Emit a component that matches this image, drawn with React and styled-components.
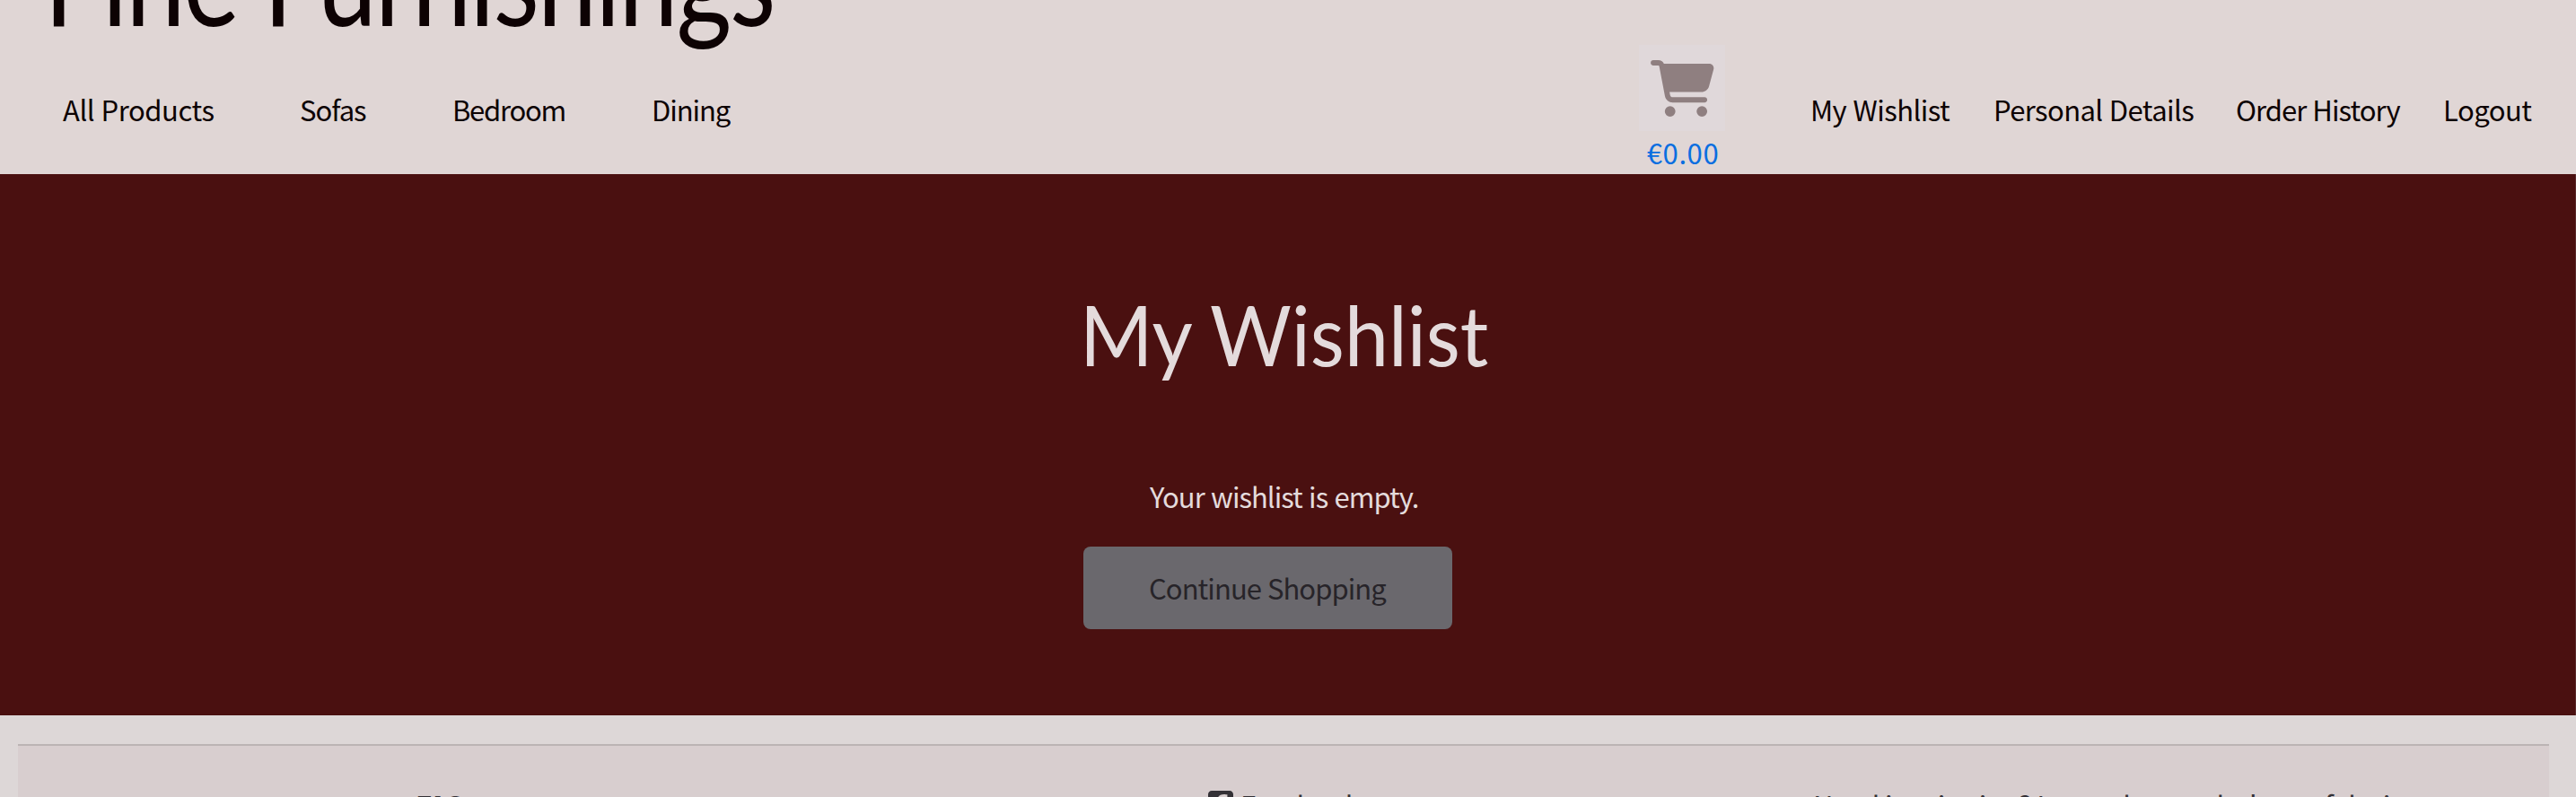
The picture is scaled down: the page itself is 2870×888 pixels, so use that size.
import React from "react";
import styled, { createGlobalStyle } from "styled-components";
import { FaCartShopping, FaSquareFacebook } from "react-icons/fa6";

const GlobalStyle = createGlobalStyle`
  * { box-sizing: border-box; }
  body {
    margin: 0;
    background: #ddd7d7;
    font-family: "Noto Sans CJK JP", "Noto Sans", sans-serif;
    font-size: 31px;
    line-height: 48px;
    color: #0d0203;
  }
`;

const Page = styled.div`
  height: 888px;
  overflow: hidden;
  display: flex;
  flex-direction: column;
`;

const Header = styled.header`
  flex: none;
  height: 194px;
  background: #e0d6d5;
  display: flex;
  flex-direction: column;
`;

const BrandStrip = styled.div`
  flex: none;
  height: 50px;
  padding-left: 49px;
  display: flex;
  align-items: flex-end;
`;

const Brand = styled.div`
  flex: none;
  font-family: Lato, sans-serif;
  font-size: 144px;
  line-height: 160px;
  letter-spacing: -2.6px;
  margin-bottom: -4px;
  transform: scaleX(0.825);
  transform-origin: left;
  white-space: nowrap;
`;

const NavBar = styled.nav`
  flex: none;
  height: 144px;
  padding: 0 48px 0 70px;
  display: flex;
  justify-content: space-between;
`;

const Links = styled.div`
  display: flex;
  gap: ${(p) => p.$gap}px;
  padding-top: 48px;
`;

const NavLink = styled.a`
  width: ${(p) => p.$width}px;
  height: 48px;
  line-height: 48px;
  letter-spacing: ${(p) => p.$spacing || 0}px;
  word-spacing: 1px;
  white-space: nowrap;
`;

const Account = styled.div`
  display: flex;
`;

const Cart = styled.a`
  width: 96px;
  margin-right: 95px;
  display: flex;
  flex-direction: column;
  align-items: center;
  color: #0a6ee0;
`;

const CartPicture = styled.span`
  flex: none;
  width: 96px;
  height: 96px;
  background: #e0d8da;
  color: #8f7f80;
  display: flex;
  align-items: center;
  justify-content: center;
`;

const CartIcon = styled(FaCartShopping)`
  width: 71px;
  height: 63px;
`;

const CartTotal = styled.span`
  height: 48px;
  line-height: 48px;
  letter-spacing: 0.6px;
  padding-left: 2px;
`;

const Main = styled.main`
  flex: none;
  height: 603px;
  background: #4a1010;
  border-right: 1px solid #5b2b2d;
  color: #e4dbdc;
  padding: 106px 0 0 1207px;
  display: flex;
  flex-direction: column;
  align-items: flex-start;
`;

const Title = styled.h1`
  margin: 0 0 0 -4px;
  font-family: Lato, sans-serif;
  font-weight: 400;
  font-size: 94px;
  line-height: 144px;
  transform: scaleX(0.935);
  transform-origin: left;
  white-space: nowrap;
`;

const Message = styled.p`
  margin: 85px 0 0 74px;
  height: 80px;
  letter-spacing: -1px;
  word-spacing: 1.5px;
  white-space: nowrap;
`;

const ShopButton = styled.button`
  width: 411px;
  height: 92px;
  padding: 0 0 0 73px;
  border: 0;
  border-radius: 8px;
  background: #6a686d;
  color: #272429;
  font: inherit;
  letter-spacing: -0.95px;
  word-spacing: 1px;
  text-align: left;
  white-space: nowrap;
`;

const Footer = styled.footer`
  flex: none;
  width: 2820px;
  height: 200px;
  margin: 32px 0 0 20px;
  border-top: 2px solid #bbb4b4;
  background: #d8cecf;
  color: #343136;
  padding-top: 42px;
  display: flex;
`;

const FooterItem = styled.div`
  width: ${(p) => p.$width}px;
  margin-left: ${(p) => p.$indent}px;
  font-weight: ${(p) => (p.$bold ? 700 : 400)};
  letter-spacing: ${(p) => p.$spacing || 0}px;
  display: flex;
  gap: 8px;
  white-space: nowrap;
`;

const FacebookIcon = styled(FaSquareFacebook)`
  flex: none;
  width: 28px;
  height: 32px;
  margin-top: 6px;
`;

export default function App() {
  return (
    <Page>
      <GlobalStyle />
      <Header>
        <BrandStrip>
          <Brand>Fine Furnishings</Brand>
        </BrandStrip>
        <NavBar>
          <Links $gap={96}>
            <NavLink $width={168} $spacing={-0.45}>All Products</NavLink>
            <NavLink $width={74} $spacing={-1}>Sofas</NavLink>
            <NavLink $width={126} $spacing={-1.25}>Bedroom</NavLink>
            <NavLink $width={88} $spacing={-1.1}>Dining</NavLink>
          </Links>
          <Account>
            <Cart>
              <CartPicture>
                <CartIcon />
              </CartPicture>
              <CartTotal>€0.00</CartTotal>
            </Cart>
            <Links $gap={49}>
              <NavLink $width={155} $spacing={-0.55}>My Wishlist</NavLink>
              <NavLink $width={221} $spacing={-0.6}>Personal Details</NavLink>
              <NavLink $width={182} $spacing={-0.95}>Order History</NavLink>
              <NavLink $width={100} $spacing={-0.5}>Logout</NavLink>
            </Links>
          </Account>
        </NavBar>
      </Header>
      <Main>
        <Title>My Wishlist</Title>
        <Message>Your wishlist is empty.</Message>
        <ShopButton>Continue Shopping</ShopButton>
      </Main>
      <Footer>
        <FooterItem $indent={443} $width={883} $spacing={-2} $bold>FAQ</FooterItem>
        <FooterItem $indent={0} $width={674} $spacing={-0.8}>
          <FacebookIcon />
          Facebook
        </FooterItem>
        <FooterItem $indent={0} $width={700} $spacing={-0.6}>
          Need inspiration? Learn the psychology of design
        </FooterItem>
      </Footer>
    </Page>
  );
}
